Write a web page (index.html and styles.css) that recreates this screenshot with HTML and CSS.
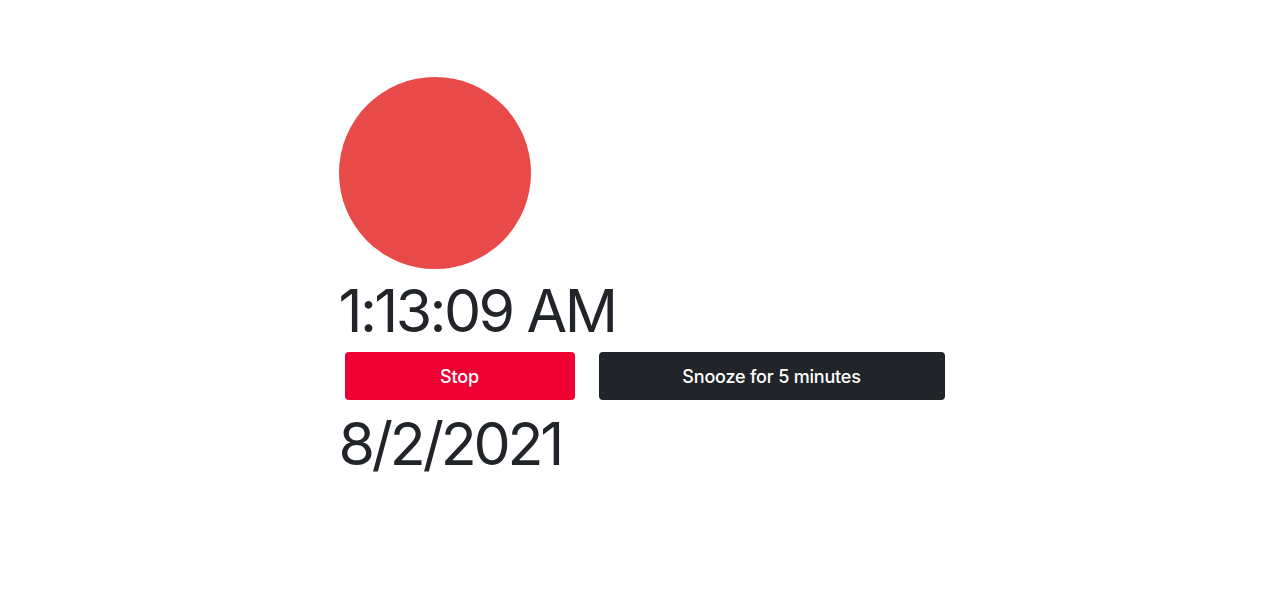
FILE: index.html
```html
<!DOCTYPE html>
<html lang="en">
<head>
<meta charset="utf-8">
<title>Alarm</title>
<link rel="stylesheet" href="styles.css">
</head>
<body>
<main class="alarm">
  <div class="indicator"></div>
  <div class="time">1:13:09 AM</div>
  <div class="actions">
    <button class="btn btn-stop">Stop</button>
    <button class="btn btn-snooze">Snooze for 5 minutes</button>
  </div>
  <div class="date">8/2/2021</div>
</main>
</body>
</html>
```
FILE: styles.css
```css
html, body {
  margin: 0;
  padding: 0;
  background: #fff;
}
body {
  font-family: Inter, "Noto Sans", sans-serif;
  color: #212529;
}
.alarm {
  width: 606px;
  margin: 0 auto;
  padding-top: 77px;
  display: flex;
  flex-direction: column;
  align-items: flex-start;
}
.indicator {
  width: 192px;
  height: 192px;
  border-radius: 50%;
  background: #e84a4a;
}
.time, .date {
  font-size: 59px;
  line-height: 72px;
  font-weight: 400;
  letter-spacing: -2.6px;
}
.time {
  margin-top: 6px;
}
.actions {
  display: flex;
  gap: 24px;
  padding-left: 6px;
  margin-top: 5px;
}
.btn {
  height: 48px;
  border: none;
  border-radius: 4px;
  color: #fff;
  font-family: Inter, "Noto Sans", sans-serif;
  font-size: 18px;
  font-weight: 500;
  letter-spacing: -0.2px;
  cursor: pointer;
}
.btn-stop {
  width: 230px;
  background: #ee0033;
}
.btn-snooze {
  width: 346px;
  background: #212529;
}
.date {
  margin-top: 8px;
  letter-spacing: -3.2px;
}
```
